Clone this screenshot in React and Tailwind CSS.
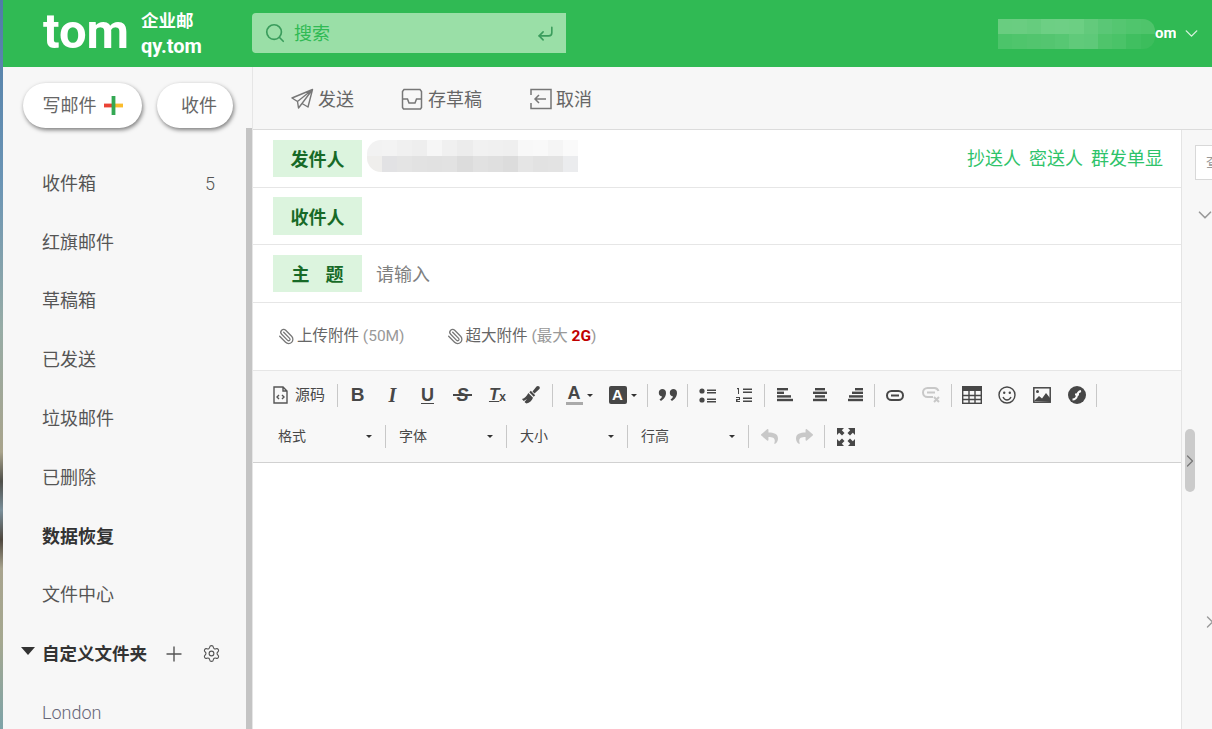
import { ChevronDown, ChevronRight, Plus, Search, Settings, Paperclip, CornerDownLeft } from "lucide-react";
import { FaReply, FaShare } from "react-icons/fa";

const folders = ["收件箱", "红旗邮件", "草稿箱", "已发送", "垃圾邮件", "已删除", "数据恢复", "文件中心"];

const headerBlur = [
  ["#69cd80", "#6acd81", "#66cc7e", "#6dcf84", "#6ecf85", "#6ccf83", "#63ca7c", "#5ac776", "#55c671", "#50c56d", "#4fc46b"],
  ["#4cc46a", "#4fc56c", "#52c56e", "#54c570", "#57c773", "#60ca7a", "#5ec979", "#4fc46b", "#4ac368", "#40bf60", "#3cbd5c"],
];
const senderBlur = [
  ["#f2f2f2", "#f3f3f3", "#f0f0f0", "#eeeeee", "#f6f6f6", "#f0f0f0", "#ececec", "#f1f1f1", "#f0f0f0", "#efefef", "#f8f8f8", "#f9f9f9", "#f5f5f5", "#fafafa"],
  ["#efeeec", "#e2e2e4", "#e4e4e4", "#e2e2e2", "#e1e1e1", "#e2e2e2", "#dcdcdc", "#e1e1e1", "#dfdfdf", "#dcdcdc", "#e5e5e5", "#e2e2e2", "#e3e3e3", "#ebecee"],
];

const Mosaic = ({ rows, className }) => (
  <div className={`flex flex-col overflow-hidden ${className}`}>
    {rows.map((row, i) => (
      <div key={i} className="flex flex-1">
        {row.map((c, j) => (
          <div key={j} className="flex-1" style={{ backgroundColor: c }} />
        ))}
      </div>
    ))}
  </div>
);

const Sep = () => (
  <div className="w-[5px] h-[23px] flex justify-center shrink-0">
    <div className="w-px h-full bg-[#c8c8c8]" />
  </div>
);

const Caret = () => (
  <div className="w-0 h-0 border-x-[3.5px] border-x-transparent border-t-[3.5px] border-t-[#333]" />
);

const Btn = ({ children, className = "" }) => (
  <div className={`w-[35px] h-[30px] flex items-center justify-center shrink-0 text-[#474747] ${className}`}>{children}</div>
);

const Combo = ({ label }) => (
  <div className="w-[116px] h-[23px] pl-[11px] pr-[11px] flex items-center justify-between shrink-0 text-[14px] text-[#484848]">
    <span>{label}</span>
    <Caret />
  </div>
);

const Label = ({ children, className = "" }) => (
  <div className={`w-[89px] pt-[2px] bg-[#dcf4de] flex items-center justify-center text-[18px] font-bold text-[#176a27] shrink-0 ${className}`}>
    {children}
  </div>
);

const Lines = ({ bars }) => (
  <svg width="16" height="14" viewBox="0 0 16 14" fill="#474747">
    {bars.map((b, i) => (
      <rect key={i} x={b[0]} y={i * 3.6} width={b[1]} height="2.400" />
    ))}
  </svg>
);

export default function App() {
  return (
    <div className="flex w-[1212px] h-[729px] overflow-hidden bg-white font-['Roboto','Noto_Sans_CJK_SC',sans-serif]">
      <div className="w-[3px] shrink-0 bg-[linear-gradient(to_bottom,#4f7ca8_0%,#6b95b5_25%,#97aca6_45%,#a9a48c_62%,#4f4f4a_66%,#7a8f9a_70%,#4e473e_74%,#a8a48e_78%,#a5a890_88%,#7da3a8_100%)]" />
      <div className="flex-1 min-w-0 flex flex-col">
        {/* top bar */}
        <header className="h-[67px] shrink-0 bg-[#30ba54] flex items-center text-white">
          <div className="ml-[40px] w-[98px] text-[49px] font-bold leading-none pb-[4px]">tom</div>
          <div className="w-[111px] pt-[4px] flex flex-col leading-none font-bold">
            <span className="text-[17.500px] leading-[20px]">企业邮</span>
            <span className="text-[20px] leading-[30px]">qy.tom</span>
          </div>
          <div className="w-[314px] h-[40px] mb-[1px] bg-[#9adfa7] rounded-l-[4px] flex items-center pl-[12px] pr-[11px] text-[#30ba54]">
            <Search size={22} strokeWidth={1.8} className="text-[#3a9c5c]" />
            <span className="ml-[8px] text-[18px]">搜索</span>
            <CornerDownLeft size={19} strokeWidth={2} className="ml-auto text-[#3a9c5c]" />
          </div>
          <div className="ml-auto flex items-center pr-[10px]">
            <Mosaic rows={headerBlur} className="w-[157px] h-[30px] rounded-r-[12px]" />
            <span className="text-[15px] font-bold w-[21px] overflow-hidden text-right">om</span>
            <ChevronDown size={21} strokeWidth={1.6} className="ml-[5px] text-[#d9f3df]" />
          </div>
        </header>

        <div className="flex-1 min-h-0 flex">
          {/* sidebar */}
          <aside className="w-[250px] shrink-0 flex bg-[#f7f7f7] border-r border-[#e6e6e6]">
            <div className="flex-1 min-w-0">
              <div className="flex pt-[16px] pl-[20px] gap-[15px]">
                <div className="w-[119px] h-[45px] rounded-full bg-white shadow-[1px_2px_4px_rgba(0,0,0,0.5)] flex items-center justify-center text-[18px] text-[#666]">
                  写邮件
                  <svg width="19" height="19" viewBox="0 0 20 20" className="ml-[7px]">
                    <rect x="0" y="8" width="10" height="4" fill="#ea4335" />
                    <rect x="10" y="8" width="10" height="4" fill="#fbbc2c" />
                    <rect x="8" y="0" width="4" height="20" fill="#34a853" />
                  </svg>
                </div>
                <div className="w-[76px] h-[45px] rounded-full bg-white shadow-[1px_2px_4px_rgba(0,0,0,0.5)] flex items-center justify-end pr-[16px] text-[18px] text-[#666]">
                  收件
                </div>
              </div>
              <nav className="mt-[26px] text-[18px] text-[#555]">
                {folders.map((f, i) => (
                  <div key={f} className={`h-[58.8px] pl-[39px] pr-[31px] flex items-center justify-between ${f === "数据恢复" ? "font-bold text-[#333]" : ""}`}>
                    <span>{f}</span>
                    {i === 0 && <span className="font-light">5</span>}
                  </div>
                ))}
                <div className="h-[58.8px] pl-[18px] flex items-center">
                  <div className="w-0 h-0 border-x-[7.5px] border-x-transparent border-t-[8px] border-t-[#333] mb-[6px]" />
                  <span className="ml-[7px] text-[17.500px] font-bold text-[#333]">自定义文件夹</span>
                  <Plus size={24} strokeWidth={1.4} className="ml-[15px] text-[#555]" />
                  <Settings size={19} strokeWidth={1.4} className="ml-[16px] text-[#555]" />
                </div>
                <div className="h-[58.8px] pl-[39px] flex items-center text-[#667] font-light">London</div>
              </nav>
            </div>
            <div className="w-[6px] mt-[61px] bg-[#c4c4c4]" />
          </aside>

          <div className="flex-1 min-w-0 flex flex-col">
            {/* send actions */}
            <div className="h-[63px] shrink-0 bg-[#f7f7f7] border-b border-[#dcdcdc] pt-[2px] flex items-center text-[18px] text-[#666]">
              <div className="ml-[38px] flex items-center">
                <svg width="23" height="22" viewBox="0 0 23 22" fill="none" stroke="#777" strokeWidth="1.4" strokeLinejoin="round">
                  <path d="M21.5 1.5 1 10l5.5 3.5zM21.5 1.5 6.5 13.5l1 6.5 3.5-4.5zM21.5 1.5 17 19l-6-3.500" />
                </svg>
                <span className="ml-[4px]">发送</span>
              </div>
              <div className="ml-[47px] flex items-center">
                <svg width="22" height="22" viewBox="0 0 22 22" fill="none" stroke="#777" strokeWidth="1.5">
                  <path d="M3 1.500h16l1.500 2v16l-1 1.500H2.500l-1-1.500v-16z" />
                  <path d="M1.500 11h5l1.500 4h6l1.500-4h5" />
                </svg>
                <span className="ml-[5px]">存草稿</span>
              </div>
              <div className="ml-[48px] flex items-center">
                <svg width="22" height="22" viewBox="0 0 22 22" fill="none" stroke="#777" strokeWidth="1.5">
                  <path d="M1 7V1.500h20v19H1V15" />
                  <path d="M16 11H5M9 7l-4 4 4 4" />
                </svg>
                <span className="ml-[4px]">取消</span>
              </div>
            </div>

            <div className="flex-1 min-h-0 flex">
              {/* compose */}
              <main className="flex-1 min-w-0 flex flex-col bg-white">
                <div className="h-[58px] shrink-0 border-b border-[#e6e6e6] pl-[20px] pr-[18px] pt-[10px] flex items-start">
                  <Label className="h-[37px]">发件人</Label>
                  <Mosaic rows={senderBlur} className="ml-[5px] w-[211px] h-[32px] rounded-l-[14px]" />
                  <div className="ml-auto mt-[6px] flex gap-[8px] text-[18px] leading-[26px] text-[#2ec36a]">
                    <span>抄送人</span>
                    <span>密送人</span>
                    <span>群发单显</span>
                  </div>
                </div>
                <div className="h-[57px] shrink-0 border-b border-[#e6e6e6] pl-[20px] pt-[9px]">
                  <Label className="h-[38px] pt-0">收件人</Label>
                </div>
                <div className="h-[58px] shrink-0 border-b border-[#e6e6e6] pl-[20px] pt-[10px] flex items-start">
                  <Label className="h-[37px] gap-[16px]">
                    <span>主</span>
                    <span>题</span>
                  </Label>
                  <span className="ml-[14px] text-[18px] leading-[39px] text-[#808080]">请输入</span>
                </div>
                <div className="h-[67px] shrink-0 pl-[25px] flex items-center text-[15.500px] text-[#666]">
                  <Paperclip size={17} strokeWidth={1.8} className="text-[#777] -scale-x-100" />
                  <span className="ml-[2px]">上传附件 <span className="text-[#999]">(50M)</span></span>
                  <Paperclip size={17} strokeWidth={1.8} className="ml-[42px] text-[#777] -scale-x-100" />
                  <span className="ml-[2px]">
                    超大附件 <span className="text-[#999]">(最大 </span>
                    <b className="text-[#c00000]">2G</b>
                    <span className="text-[#999]">)</span>
                  </span>
                </div>

                {/* editor toolbar */}
                <div className="h-[93px] shrink-0 bg-[#f8f8f8] border-t border-[#e6e6e6] border-b border-b-[#d1d1d1] pt-[9px]">
                  <div className="h-[30px] flex items-center pl-[20px]">
                    <div className="w-[62px] h-[30px] flex items-center shrink-0 text-[#484848]">
                      <svg width="15" height="18" viewBox="0 0 15 18" fill="none" stroke="#555" strokeWidth="1.4">
                        <path d="M1 1h9l4 4v12H1zM10 1v4h4" />
                        <path d="M6 9 4 11l2 2M9 9l2 2-2 2" />
                      </svg>
                      <span className="ml-[7px] text-[15px]">源码</span>
                    </div>
                    <Sep />
                    <Btn><span className="font-['Liberation_Sans'] font-bold text-[19px]">B</span></Btn>
                    <Btn><span className="font-['Liberation_Serif'] font-bold italic text-[20px]">I</span></Btn>
                    <Btn><span className="font-['Liberation_Sans'] font-bold text-[18px] underline underline-offset-2">U</span></Btn>
                    <Btn>
                      <span className="relative font-['Liberation_Sans'] font-bold italic text-[18px]">
                        S
                        <span className="absolute left-[-3px] right-[-3px] top-[12px] h-[2px] bg-[#474747]" />
                      </span>
                    </Btn>
                    <Btn>
                      <span className="font-['Liberation_Sans'] font-bold italic text-[17px] underline">T</span>
                      <span className="font-['Liberation_Sans'] font-bold text-[12px] self-end mb-[4px]">x</span>
                    </Btn>
                    <Btn className="pr-[3px]">
                      <svg width="20" height="20" viewBox="0 0 20 20" fill="#474747">
                        <path d="M15.500 1.500c.8-.8 2-.8 2.800 0s.6 2-.2 2.800L13.500 8.500l-2-2z" />
                        <path d="M9.800 5.800l4.400 4.400-1.500 1.500-4.400-4.400z" />
                        <path d="M7.300 8l4.700 4.700c-1 2.800-3.500 5.300-6.500 5.800-1-.4-1.500-.9-2-1.500l2.500-3-3.300 2C2 15.500 1.500 14.800 1 14c2.800-.8 5-3 6.300-6z" />
                      </svg>
                    </Btn>
                    <Sep />
                    <Btn className="w-[45px] gap-[4px] pl-[3px]">
                      <span className="font-['Liberation_Sans'] font-bold text-[18px] leading-[17px] border-b-[3px] border-[#aaa] px-[2px]">A</span>
                      <Caret />
                    </Btn>
                    <Btn className="w-[45px] gap-[4px]">
                      <span className="w-[18px] h-[18px] rounded-[2px] bg-[#474747] text-white font-['Liberation_Sans'] font-bold text-[15px] leading-[18px] text-center">A</span>
                      <Caret />
                    </Btn>
                    <Sep />
                    <Btn>
                      <svg width="19" height="12" viewBox="0 0 19 12" fill="#474747">
                        <path d="M4 0a4 4 0 0 1 4 4c0 3.500-2.500 6.500-5 8L1.500 10.500C3 9.500 3.800 8.500 4 7.500A3.800 3.800 0 0 1 4 0z" />
                        <path d="M15 0a4 4 0 0 1 4 4c0 3.500-2.500 6.500-5 8l-1.500-1.500C14 9.500 14.800 8.500 15 7.500A3.800 3.800 0 0 1 15 0z" />
                      </svg>
                    </Btn>
                    <Sep />
                    <Btn className="w-[36px]">
                      <svg width="18" height="15" viewBox="0 0 18 15" fill="#474747">
                        <circle cx="3" cy="3" r="2.600" />
                        <circle cx="3" cy="12" r="2.600" />
                        <path d="M8 1.500h9V3H8zM8 4h9v1.400H8zM8 10.500h9V12H8zM8 13h9v1.400H8z" />
                      </svg>
                    </Btn>
                    <Btn className="w-[36px]">
                      <svg width="18" height="16" viewBox="0 0 18 16" fill="#474747">
                        <path d="M2 1h2v6H3V2.200H2zM1 10h4v3H2.500v1H5v1H1v-3h3v-1H1z" />
                        <path d="M8 1.500h9V3H8zM8 4.500h9V6H8zM8 10.500h9V12H8zM8 13.500h9V15H8z" />
                      </svg>
                    </Btn>
                    <Sep />
                    <Btn><Lines bars={[[0, 11], [0, 7], [0, 14], [0, 16]]} /></Btn>
                    <Btn><Lines bars={[[3, 10], [1, 14], [3, 10], [1, 14]]} /></Btn>
                    <Btn><Lines bars={[[8, 8], [5, 11], [2, 14], [1, 15]]} /></Btn>
                    <Sep />
                    <Btn className="w-[36px]">
                      <svg width="18" height="11" viewBox="0 0 18 11" fill="none" stroke="#474747" strokeWidth="2">
                        <rect x="1" y="1" width="16" height="9" rx="4.500" />
                        <path d="M5 5.500h8" />
                      </svg>
                    </Btn>
                    <Btn className="w-[36px]">
                      <svg width="19" height="16" viewBox="0 0 19 16" fill="none" stroke="#c8c8c8" strokeWidth="2">
                        <path d="M11 10H5.500a4.500 4.500 0 0 1 0-9h7a4.500 4.500 0 0 1 4 3M5 5.500h8" />
                        <path d="M12 10l5 5M17 10l-5 5" />
                      </svg>
                    </Btn>
                    <Sep />
                    <Btn>
                      <svg width="20" height="18" viewBox="0 0 20 18" fill="none" stroke="#474747" strokeWidth="1.400">
                        <rect x="0.700" y="0.700" width="18.600" height="16.600" />
                        <rect x="0" y="0" width="20" height="5" fill="#474747" stroke="none" />
                        <path d="M7 5v12M13 5v12M1 9.500h18M1 13.500h18" />
                      </svg>
                    </Btn>
                    <Btn>
                      <svg width="18" height="18" viewBox="0 0 18 18" fill="none" stroke="#474747" strokeWidth="1.400">
                        <circle cx="9" cy="9" r="8" />
                        <path d="M5 11c1 2 2.500 3 4 3s3-1 4-3" />
                        <circle cx="6.200" cy="6.800" r="1.200" fill="#474747" stroke="none" />
                        <circle cx="11.800" cy="6.800" r="1.200" fill="#474747" stroke="none" />
                      </svg>
                    </Btn>
                    <Btn>
                      <svg width="18" height="16" viewBox="0 0 18 16" fill="none" stroke="#474747" strokeWidth="1.500">
                        <rect x="0.800" y="0.800" width="16.400" height="14.400" />
                        <circle cx="4.500" cy="4.500" r="1.500" fill="#474747" stroke="none" />
                        <path d="M1 14l5-5 3 2.500 4-5.500 4 5v4z" fill="#474747" stroke="none" />
                      </svg>
                    </Btn>
                    <Btn>
                      <svg width="18" height="18" viewBox="0 0 18 18">
                        <circle cx="9" cy="9" r="9" fill="#474747" />
                        <path d="M4.500 13.500c3 0 4-1.500 4.500-4s1.500-4 4-4.500" fill="none" stroke="#f8f8f8" strokeWidth="2" />
                        <path d="M7 8.500h4" stroke="#f8f8f8" strokeWidth="2" />
                      </svg>
                    </Btn>
                    <Sep />
                  </div>
                  <div className="mt-[15px] h-[23px] flex items-center pl-[14px]">
                    <Combo label="格式" />
                    <Sep />
                    <Combo label="字体" />
                    <Sep />
                    <Combo label="大小" />
                    <Sep />
                    <Combo label="行高" />
                    <Sep />
                    <Btn className="w-[36px] text-[#c8c8c8]"><FaReply size={17} /></Btn>
                    <Btn className="text-[#c8c8c8]"><FaShare size={17} /></Btn>
                    <Sep />
                    <Btn className="pl-[2px]">
                      <svg width="18" height="18" viewBox="0 0 18 18" fill="#474747">
                        <path d="M0 0h7L4.800 2.200 7.500 5 5 7.500 2.200 4.800 0 7z" />
                        <path d="M18 0v7l-2.200-2.200L13 7.500 10.500 5l2.700-2.800L11 0z" />
                        <path d="M0 18v-7l2.200 2.200L5 10.500 7.500 13l-2.700 2.800L7 18z" />
                        <path d="M18 18h-7l2.200-2.200L10.500 13l2.500-2.500 2.800 2.700L18 11z" />
                      </svg>
                    </Btn>
                  </div>
                </div>
                <div className="flex-1 bg-white" />
              </main>

              {/* right rail */}
              <div className="w-[31px] shrink-0 bg-[#f7f7f7] border-l border-[#e4e4e4] overflow-hidden flex flex-col">
                <div className="mt-[15px] ml-[13px] w-[30px] h-[35px] shrink-0 bg-white border border-[#d8d8d8] text-[14px] text-[#999] pl-[10px] leading-[33px]">查</div>
                <ChevronDown size={22} strokeWidth={1.8} className="mt-[24px] ml-[12px] shrink-0 text-[#999]" />
                <div className="mt-[203px] ml-[3px] w-[10px] h-[63px] shrink-0 rounded-full bg-[#cbcbcb] flex items-center justify-center">
                  <ChevronRight size={20} strokeWidth={1.5} className="text-[#777] shrink-0" />
                </div>
                <ChevronRight size={20} strokeWidth={1.6} className="mt-[120px] ml-[18px] shrink-0 text-[#999]" />
              </div>
            </div>
          </div>
        </div>
      </div>
    </div>
  );
}
